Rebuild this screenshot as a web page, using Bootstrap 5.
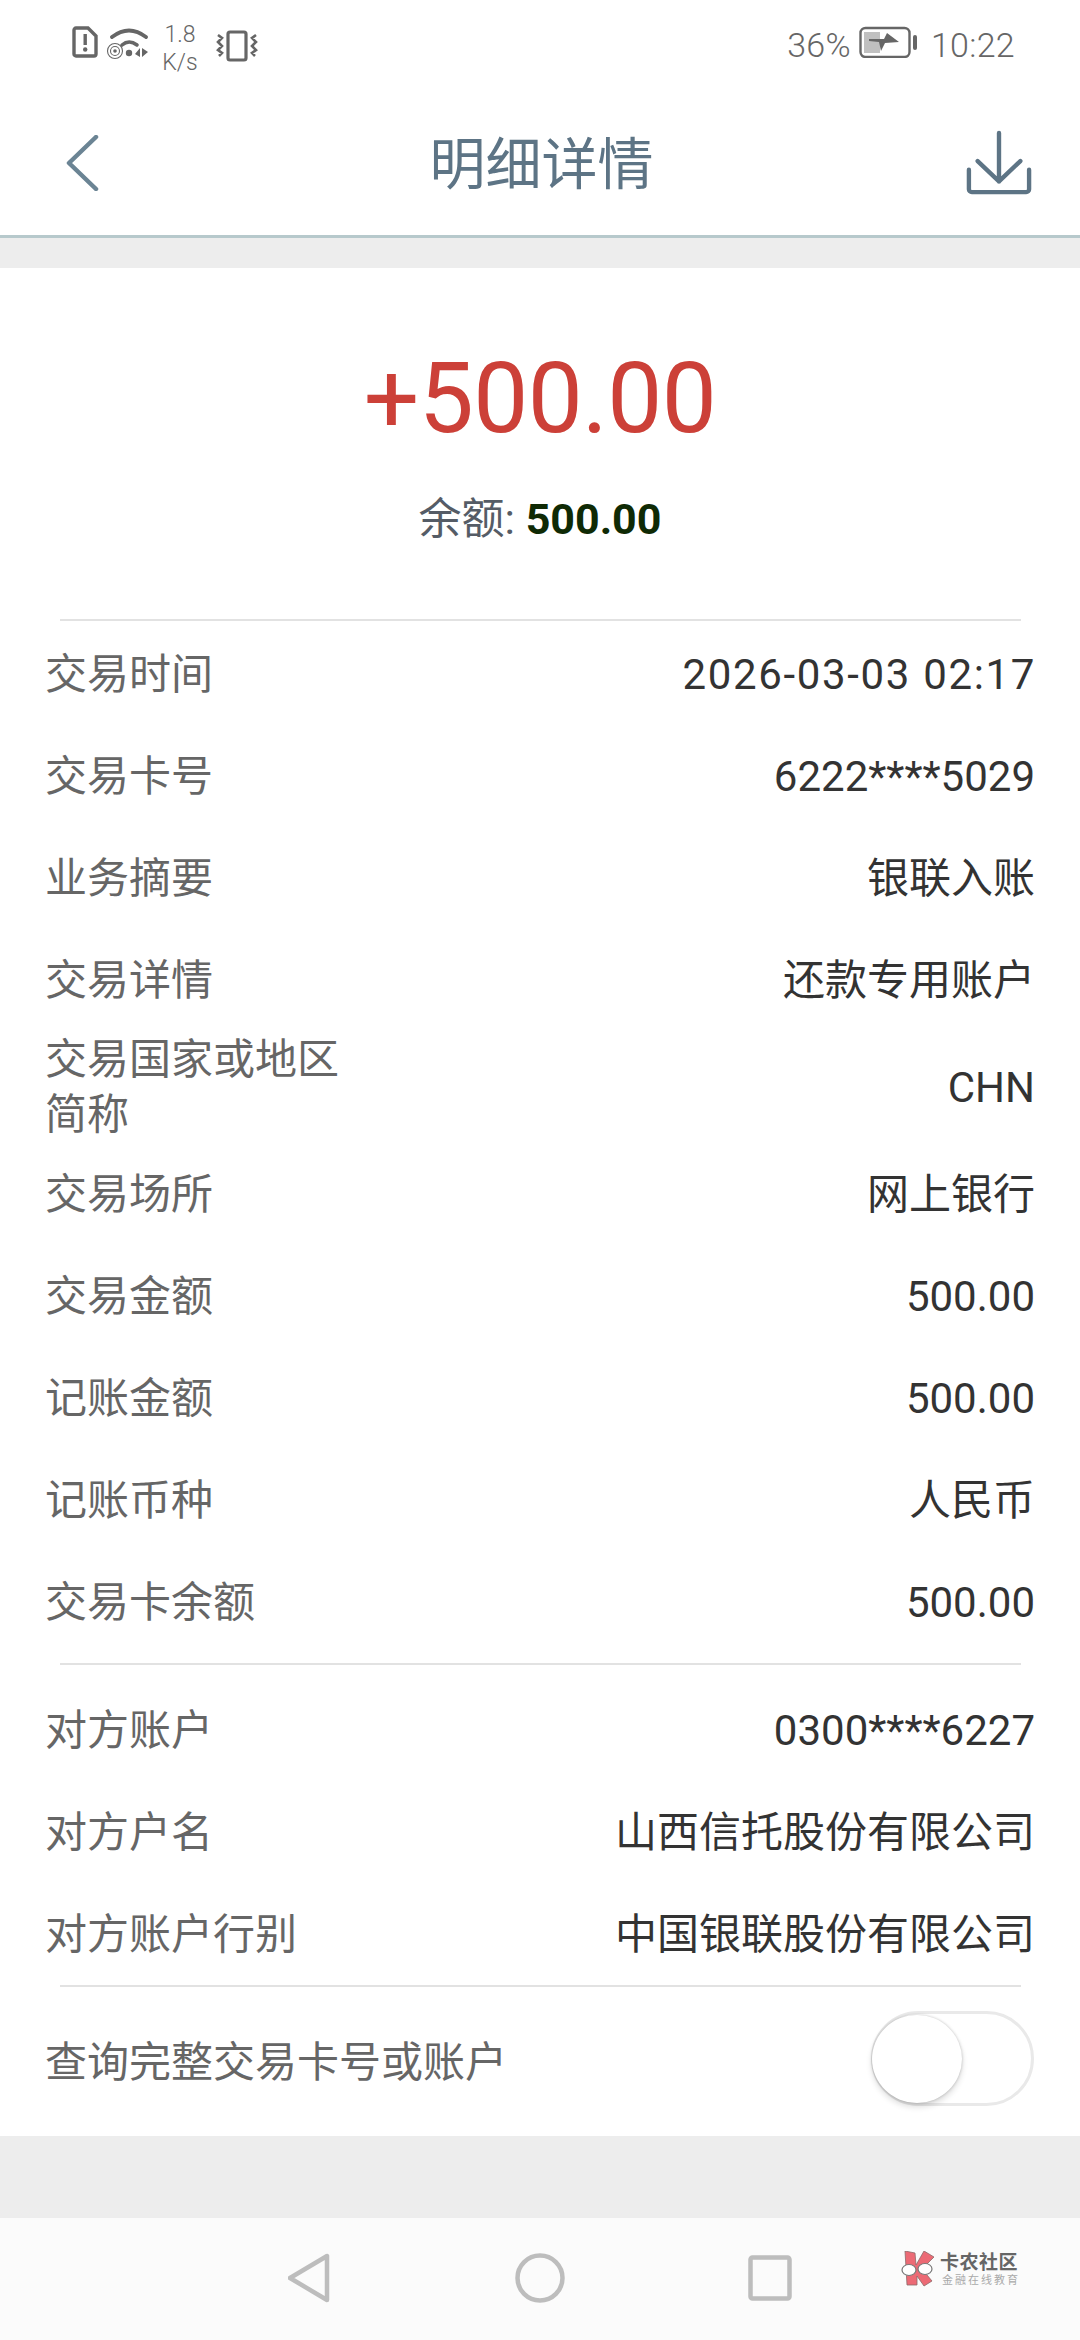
<!DOCTYPE html>
<html lang="zh-CN">

<head>
    <meta charset="UTF-8">
    <meta name="viewport" content="width=device-width, initial-scale=1.0">
    <title>明细详情</title>
    <link href="https://cdn.jsdelivr.net/npm/bootstrap@5.3.0/dist/css/bootstrap.min.css" rel="stylesheet">
    <style>
        body {
            width: 1080px;
            height: 2340px;
            overflow: hidden;
            background: #ededed;
            font-family: Roboto, "Noto Sans CJK SC", sans-serif;
        }

        /* status bar */
        .status-bar {
            height: 90px;
            padding: 22px 65px 0 72px;
            color: #666;
        }

        .net-speed {
            font-size: 23px;
            line-height: 28px;
            font-weight: 300;
            margin: -1px 16px 0 10px;
            text-align: center;
            width: 40px;
        }

        .status-text {
            font-size: 34px;
            font-weight: 300;
            line-height: 46px;
            letter-spacing: .3px;
        }

        .time-text {
            margin-left: 14px;
        }

        /* header */
        .top-bar {
            height: 148px;
            padding: 0 48px 0 65px;
            border-bottom: 3px solid #b7c9cc;
        }

        .top-title {
            font-size: 56px;
            line-height: 1;
            color: #5d7485;
            margin: 5px 0 0 18px;
        }

        .top-gap {
            height: 30px;
        }

        /* card */
        .detail-card {
            height: 1868px;
        }

        .amount-box {
            height: 351px;
            padding-top: 72px;
        }

        .amount-text {
            font-size: 98px;
            line-height: 118px;
            color: #cc4038;
            letter-spacing: -.6px;
        }

        .balance-text {
            font-size: 43px;
            line-height: 56px;
            margin-top: 33px;
            color: #555c66;
        }

        .balance-text b {
            color: #0f2a05;
            font-weight: 700;
        }

        .split-line {
            height: 2px;
            margin: 0 59px 0 60px;
            background: #e2e2e2;
        }

        .detail-row {
            height: 102px;
            padding: 0 45px;
            font-size: 42px;
            color: #333;
        }

        .detail-row.tall {
            height: 112px;
        }

        .row-label {
            width: 320px;
            line-height: 55px;
            color: #666;
        }

        .date-value {
            letter-spacing: 1.65px;
            margin-right: -1px;
        }

        .row-first {
            margin-top: 2px;
        }

        .row-last {
            margin-bottom: 10px;
        }

        .row-after {
            margin-top: 14px;
        }

        .toggle-row {
            height: 150px;
            padding: 0 46px 0 45px;
            font-size: 42px;
            color: #666;
        }

        .toggle-track {
            width: 163px;
            height: 95px;
            padding: 2px 0;
            margin-bottom: 7px;
            border: 3px solid #e9e9e9;
            border-radius: 48px;
        }

        .toggle-knob {
            width: 90px;
            height: 88px;
            margin-left: -2px;
            background: #fff;
            border-radius: 50%;
            box-shadow: 0 4px 6px rgba(0, 0, 0, .14), 0 0 3px rgba(0, 0, 0, .22);
        }

        /* bottom nav */
        .bottom-gap {
            height: 82px;
        }

        .nav-keys {
            height: 122px;
            background: #fbfbfb;
            padding-bottom: 2px;
            gap: 183px;
        }

        .logo-mark {
            position: absolute;
            left: 900px;
            top: 33px;
        }

        .logo-title {
            font-size: 19px;
            line-height: 22px;
            font-weight: 700;
            color: #666;
            letter-spacing: .5px;
        }

        .logo-sub {
            font-size: 11px;
            line-height: 13px;
            color: #aaa;
            letter-spacing: 2px;
            margin-left: 2px;
        }
    </style>
</head>

<body>

    <div class="bg-white status-bar d-flex align-items-start">
        <svg width="26" height="32" viewBox="0 0 26 32" class="mt-1 flex-shrink-0">
            <path d="M4 2h12l8 8v18a2 2 0 0 1-2 2H4a2 2 0 0 1-2-2V4a2 2 0 0 1 2-2z" fill="none" stroke="#666" stroke-width="3.4"/>
            <rect x="11.5" y="8" width="3.4" height="11" fill="#666"/>
            <circle cx="13.2" cy="23.5" r="2.2" fill="#666"/>
        </svg>
        <svg width="44" height="34" viewBox="0 0 44 34" class="mt-1 ms-2 flex-shrink-0">
            <path d="M6 11Q23-2 40 11" fill="none" stroke="#666" stroke-width="3.8" stroke-linecap="round"/>
            <path d="M16 19Q23 13 31 19" fill="none" stroke="#666" stroke-width="3.6" stroke-linecap="round"/>
            <circle cx="23" cy="27" r="3.2" fill="#666"/>
            <circle cx="9" cy="25" r="1.8" fill="#666"/>
            <circle cx="9" cy="25" r="4.5" fill="none" stroke="#666" stroke-width="1.1"/>
            <circle cx="9" cy="25" r="7.5" fill="none" stroke="#666" stroke-width="1.1"/>
            <path d="M34 22v9l-5-3zM36 22v9l6-5z" fill="#666"/>
        </svg>
        <div class="net-speed">1.8<br>K/s</div>
        <svg width="42" height="32" viewBox="0 0 42 32" class="mt-2 flex-shrink-0">
            <rect x="12" y="2" width="18" height="28" rx="2" fill="none" stroke="#666" stroke-width="3.2"/>
            <path d="M2 5l4 3-4 4 4 4-4 4 4 3-3 3M40 5l-4 3 4 4-4 4 4 4-4 3 3 3" fill="none" stroke="#666" stroke-width="2.6"/>
        </svg>
        <div class="ms-auto status-text">36%</div>
        <svg width="58" height="32" viewBox="0 0 58 32" class="ms-2 mt-1 flex-shrink-0">
            <rect x="1.5" y="2" width="49" height="29" rx="5" fill="none" stroke="#666" stroke-width="2.4"/>
            <rect x="5" y="6" width="16" height="21" fill="#c0c0c0"/>
            <path d="M10 13L25 13 28 7 40 16 26 17 22 25 20 16 10 15z" fill="#666"/>
            <rect x="54" y="9" width="4" height="15" rx="2" fill="#666"/>
        </svg>
        <div class="time-text status-text">10:22</div>
    </div>

    <div class="bg-white top-bar d-flex align-items-center justify-content-between">
        <svg width="34" height="56" viewBox="0 0 34 56">
            <path d="M31 2L4 28l27 26" fill="none" stroke="#6b8494" stroke-width="4.5" stroke-linecap="round" stroke-linejoin="round"/>
        </svg>
        <div class="top-title">明细详情</div>
        <svg width="66" height="66" viewBox="0 0 68 66">
            <path d="M34 2v50M12 31l22 21 22-21" fill="none" stroke="#5d7485" stroke-width="4.5" stroke-linecap="round" stroke-linejoin="round"/>
            <path d="M3 40v20a3 3 0 0 0 3 3h56a3 3 0 0 0 3-3V40" fill="none" stroke="#5d7485" stroke-width="4.5" stroke-linecap="round"/>
        </svg>
    </div>
    <div class="top-gap"></div>

    <div class="bg-white detail-card">
        <div class="amount-box text-center">
            <div class="amount-text">+500.00</div>
            <div class="balance-text">余额: <b>500.00</b></div>
        </div>
        <div class="split-line"></div>

        <div class="detail-row row-first d-flex align-items-center justify-content-between"><div class="row-label">交易时间</div><div class="date-value">2026-03-03 02:17</div></div>
        <div class="detail-row d-flex align-items-center justify-content-between"><div class="row-label">交易卡号</div><div>6222****5029</div></div>
        <div class="detail-row d-flex align-items-center justify-content-between"><div class="row-label">业务摘要</div><div>银联入账</div></div>
        <div class="detail-row d-flex align-items-center justify-content-between"><div class="row-label">交易详情</div><div>还款专用账户</div></div>
        <div class="detail-row tall d-flex align-items-center justify-content-between"><div class="row-label">交易国家或地区简称</div><div>CHN</div></div>
        <div class="detail-row d-flex align-items-center justify-content-between"><div class="row-label">交易场所</div><div>网上银行</div></div>
        <div class="detail-row d-flex align-items-center justify-content-between"><div class="row-label">交易金额</div><div>500.00</div></div>
        <div class="detail-row d-flex align-items-center justify-content-between"><div class="row-label">记账金额</div><div>500.00</div></div>
        <div class="detail-row d-flex align-items-center justify-content-between"><div class="row-label">记账币种</div><div>人民币</div></div>
        <div class="detail-row row-last d-flex align-items-center justify-content-between"><div class="row-label">交易卡余额</div><div>500.00</div></div>
        <div class="split-line"></div>

        <div class="detail-row row-after d-flex align-items-center justify-content-between"><div class="row-label">对方账户</div><div>0300****6227</div></div>
        <div class="detail-row d-flex align-items-center justify-content-between"><div class="row-label">对方户名</div><div>山西信托股份有限公司</div></div>
        <div class="detail-row d-flex align-items-center justify-content-between"><div class="row-label">对方账户行别</div><div>中国银联股份有限公司</div></div>
        <div class="split-line"></div>

        <div class="toggle-row d-flex align-items-center justify-content-between">
            <div>查询完整交易卡号或账户</div>
            <div class="toggle-track d-flex align-items-center"><div class="toggle-knob"></div></div>
        </div>
    </div>
    <div class="bottom-gap"></div>

    <div class="nav-keys d-flex align-items-center justify-content-center position-relative">
        <svg width="44" height="50" viewBox="0 0 44 50">
            <path d="M39 3v44L2 25z" fill="none" stroke="#bdbdbd" stroke-width="4.5" stroke-linejoin="round"/>
        </svg>
        <svg width="50" height="50" viewBox="0 0 50 50">
            <circle cx="25" cy="25" r="22.5" fill="none" stroke="#bdbdbd" stroke-width="4.5"/>
        </svg>
        <svg width="44" height="46" viewBox="0 0 44 46">
            <rect x="2.5" y="2.5" width="39" height="41" rx="2" fill="none" stroke="#bdbdbd" stroke-width="4.5"/>
        </svg>
        <div class="logo-mark d-flex align-items-center gap-1">
            <svg width="36" height="36" viewBox="0 0 36 36">
                <path d="M5 0L15 2 16 14 24 0 34 6 22 18 32 30 24 35 17 25 17 34 7 34z" fill="#ec6a75" stroke="#8c6a6a" stroke-width=".8"/>
                <ellipse cx="9" cy="19" rx="7" ry="5.5" fill="#fff" stroke="#777" stroke-width="1.2"/>
                <ellipse cx="25" cy="18" rx="7" ry="5.5" fill="#fff" stroke="#777" stroke-width="1.2"/>
            </svg>
            <div>
                <div class="logo-title">卡农社区</div>
                <div class="logo-sub">金融在线教育</div>
            </div>
        </div>
    </div>

    <script src="https://cdn.jsdelivr.net/npm/bootstrap@5.3.0/dist/js/bootstrap.bundle.min.js"></script>
</body>

</html>
